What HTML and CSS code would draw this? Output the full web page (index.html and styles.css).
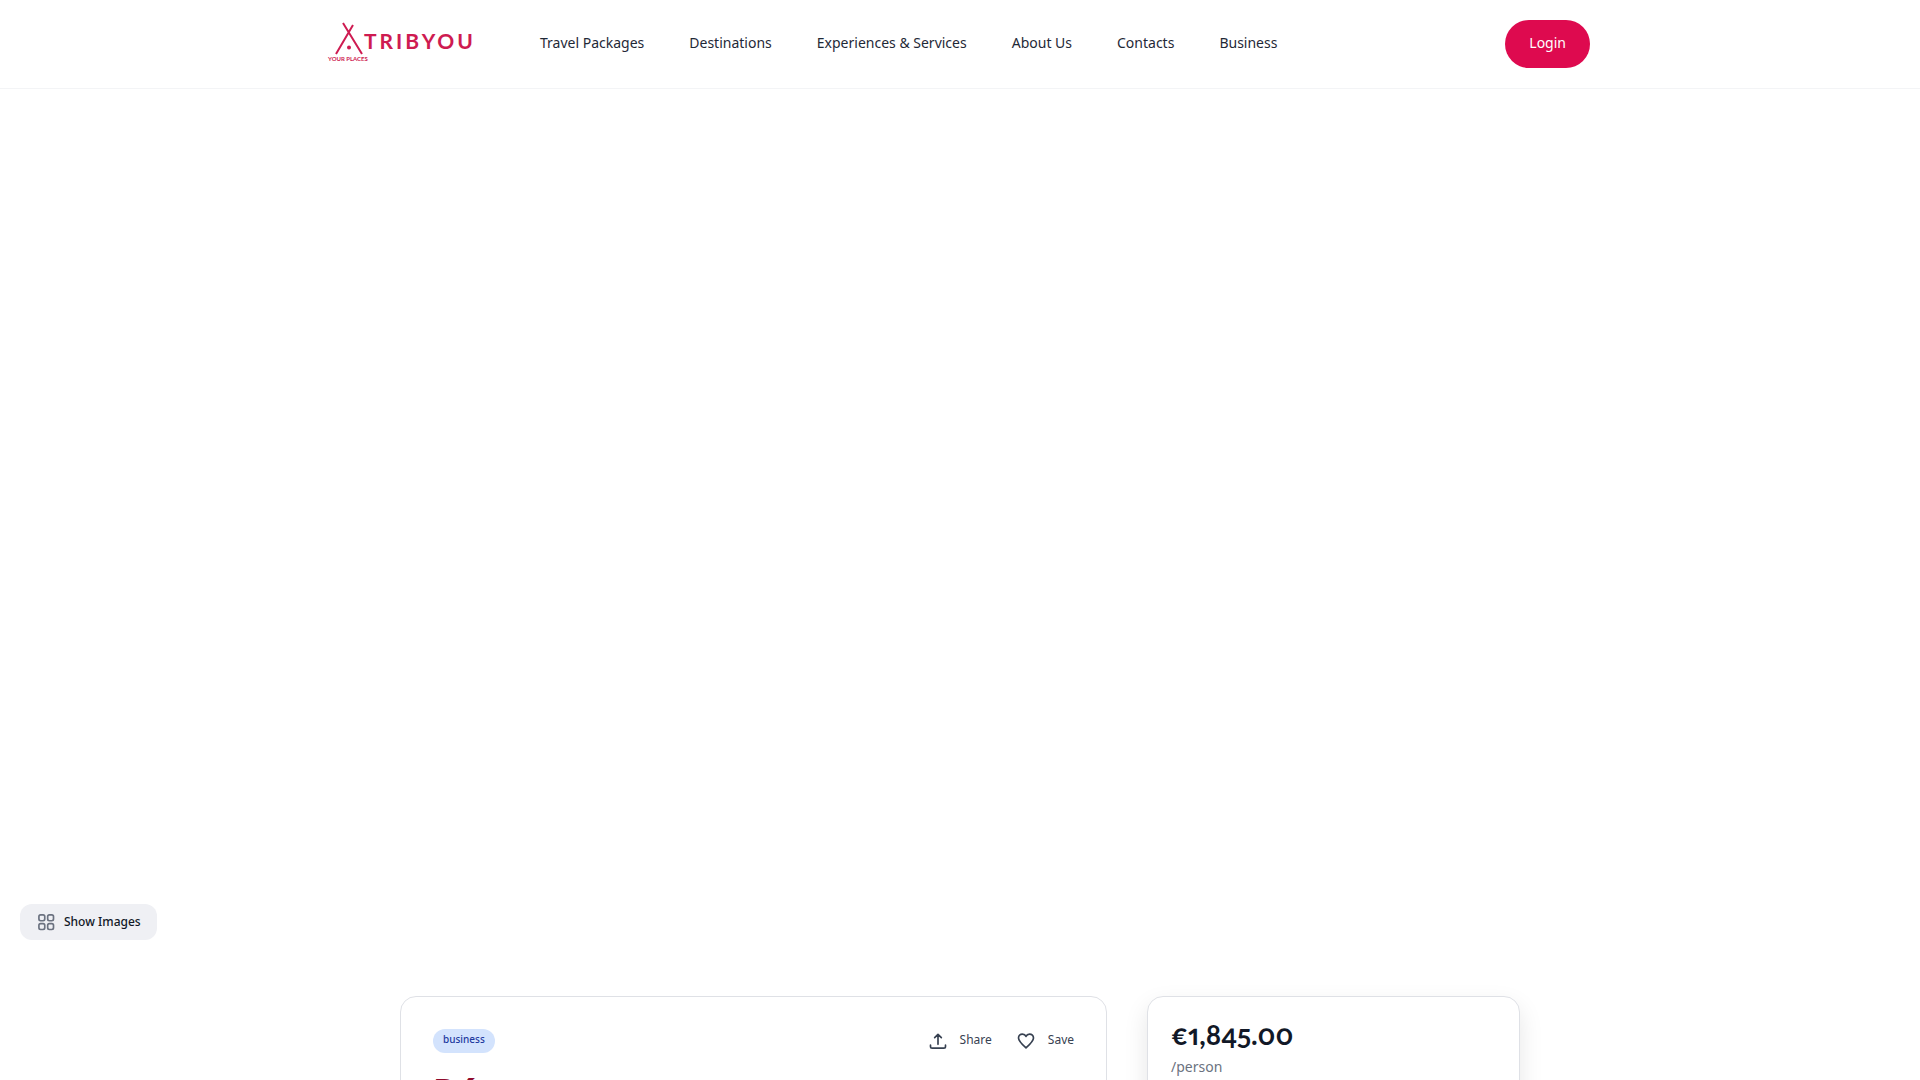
FILE: index.html
```html
<!doctype html>
<html lang="en">
<head>
<meta charset="utf-8">
<title>Tribyou - Your Places</title>
<link rel="stylesheet" href="styles.css">
</head>
<body>
<header class="header">
	<div class="header-inner">
		<a href="#" class="logo" aria-label="Tribyou">
			<svg class="logo-tent" viewBox="0 0 30 34" aria-hidden="true">
				<path d="M9 1l19 31M19 3L2 32" />
				<circle cx="15" cy="25.500" r="1" />
			</svg>
			<span class="logo-name">TRIBYOU</span>
			<span class="logo-tag">YOUR PLACES</span>
		</a>
		<nav class="nav">
			<a href="#">Travel Packages</a>
			<a href="#">Destinations</a>
			<a href="#">Experiences &amp; Services</a>
			<a href="#">About Us</a>
			<a href="#">Contacts</a>
			<a href="#">Business</a>
		</nav>
		<button type="button" class="btn-login">Login</button>
	</div>
</header>

<section class="gallery">
	<button type="button" class="btn-images">
		<svg class="icon" viewBox="0 0 24 24" aria-hidden="true">
			<rect x="3.5" y="3.5" width="7" height="7" rx="2" />
			<rect x="14" y="3.5" width="7" height="7" rx="2" />
			<rect x="3.5" y="14" width="7" height="7" rx="2" />
			<rect x="14" y="14" width="7" height="7" rx="2" />
		</svg>
		<span>Show Images</span>
	</button>
</section>

<main class="content">
	<article class="card details">
		<div class="details-top">
			<span class="badge">business</span>
			<div class="actions">
				<button type="button" class="action">
					<svg class="icon" viewBox="0 0 24 24" aria-hidden="true">
						<path d="M12 16V4M8 8l4-4 4 4M3 17v1.500a2 2 0 0 0 2 2h14a2 2 0 0 0 2-2V17" />
					</svg>
					<span>Share</span>
				</button>
				<button type="button" class="action">
					<svg class="icon" viewBox="0 0 24 24" aria-hidden="true">
						<path d="M21 8.250c0-2.485-2.099-4.500-4.688-4.500-1.935 0-3.597 1.126-4.312 2.733-.715-1.607-2.377-2.733-4.313-2.733C5.100 3.750 3 5.765 3 8.250c0 3.500 3 6.500 9 12 6-5.500 9-8.500 9-12z" />
					</svg>
					<span>Save</span>
				</button>
			</div>
		</div>
		<h1 class="title">Ré</h1>
	</article>
	<aside class="card booking">
		<div class="price">€1,845.00</div>
		<div class="price-unit">/person</div>
	</aside>
</main>
</body>
</html>
```

FILE: styles.css
```css
* {
  box-sizing: border-box;
}
body {
  margin: 0;
  background: #fff;
  color: #111827;
  font-family: "Noto Sans", "Open Sans", sans-serif;
  font-size: 14px;
}
a {
  color: inherit;
  text-decoration: none;
}
button {
  border: 0;
  background: none;
  font: inherit;
  color: inherit;
  cursor: pointer;
}
.icon {
  width: 20px;
  height: 20px;
  fill: none;
  stroke: currentColor;
  stroke-width: 2;
  stroke-linecap: round;
  stroke-linejoin: round;
}

.header {
  border-bottom: 1px solid #f3f4f6;
}
.header-inner {
  display: flex;
  align-items: center;
  max-width: 1264px;
  height: 88px;
  margin: 0 auto;
  padding-right: 2px;
}
.logo {
  display: grid;
  grid-template-columns: 36px auto;
  width: 148px;
  padding-bottom: 4px;
  color: #ce1b51;
}
.logo-tent {
  width: 30px;
  height: 34px;
  margin-left: 6px;
  fill: currentColor;
  stroke: currentColor;
  stroke-width: 2;
}
.logo-name {
  align-self: center;
  padding-top: 4px;
  font: 700 21px/24px Lato, sans-serif;
  letter-spacing: 3px;
}
.logo-tag {
  grid-column: 1 / 3;
  font: 700 6px/6px Lato, sans-serif;
}
.nav {
  display: flex;
  flex: 1;
  gap: 45px;
  margin-left: 64px;
  padding-bottom: 4px;
  color: #1f2937;
  white-space: nowrap;
}
.btn-login {
  height: 48px;
  padding: 0 24px 4px;
  border-radius: 24px;
  background: #de0a4f;
  color: #fff;
}

.gallery {
  display: flex;
  align-items: flex-end;
  height: calc(100vh - 229px);
  min-height: 400px;
  padding: 0 20px;
}
.btn-images {
  display: flex;
  align-items: center;
  gap: 8px;
  height: 36px;
  padding: 0 16px;
  border-radius: 12px;
  background: #eff0f4;
  font-size: 12px;
  font-weight: 500;
}
.btn-images .icon {
  stroke: #6b7280;
}

.content {
  display: grid;
  grid-template-columns: 1fr 373px;
  gap: 40px;
  max-width: 1120px;
  margin: 56px auto 0;
}
.card {
  border: 1px solid #dfe1e6;
  border-radius: 16px;
  background: #fff;
}
.details {
  padding: 32px;
}
.details-top,
.actions,
.action {
  display: flex;
  align-items: center;
}
.details-top {
  justify-content: space-between;
  height: 24px;
}
.badge {
  height: 24px;
  padding: 0 10px;
  border-radius: 12px;
  background: #d3e3fd;
  color: #1e3a9f;
  font-size: 10px;
  font-weight: 500;
  line-height: 20px;
}
.actions {
  gap: 24px;
}
.action {
  gap: 12px;
  padding: 0;
  color: #374151;
  font-size: 12px;
  line-height: 24px;
}
.btn-images span,
.action span {
  padding-bottom: 2px;
}
.title {
  margin: 16px 0 0;
  color: #8f0a2c;
  font-size: 36px;
  line-height: 45px;
}
.booking {
  padding: 20px 23px;
  box-shadow: 0 10px 24px rgba(0, 0, 0, .1);
}
.price {
  font: 700 28px/34px Lato, sans-serif;
  font-variant-numeric: oldstyle-nums proportional-nums;
}
.price-unit {
  color: #6b7280;
  line-height: 32px;
}
```
